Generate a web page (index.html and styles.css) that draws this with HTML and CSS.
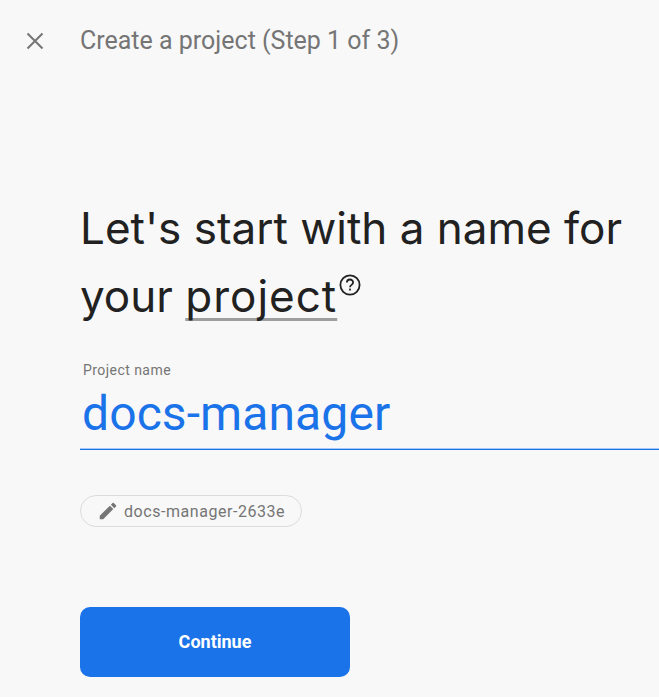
FILE: index.html
```html
<!DOCTYPE html>
<html lang="en">
<head>
<meta charset="utf-8">
<title>Create a project</title>
<link rel="stylesheet" href="styles.css">
</head>
<body>
<header class="topbar">
  <svg class="close" width="24" height="24" viewBox="0 0 24 24"><path d="M4.5 4.5l15 15M19.5 4.5l-15 15" fill="none" stroke="#757575" stroke-width="2"/></svg>
  <span class="step">Create a project (Step 1 of 3)</span>
</header>
<main class="content">
  <h1 class="title">Let's start with a name for your <span class="term">project</span><svg class="help" width="24" height="24" viewBox="0 0 24 24"><circle cx="12" cy="12" r="9.6" fill="none" stroke="#212121" stroke-width="1.8"/><path d="M8.9 9.6a3.1 3.1 0 0 1 6.2 0c0 2.2-3.1 2.3-3.1 4.6" fill="none" stroke="#212121" stroke-width="1.8"/><rect x="11.1" y="15.6" width="1.8" height="1.9" fill="#212121"/></svg></h1>
  <div class="field">
    <div class="label">Project name</div>
    <div class="value">docs-manager</div>
  </div>
  <div class="chip">
    <svg width="22" height="22" viewBox="0 0 24 24"><path fill="#757575" d="M3 17.25V21h3.75L17.81 9.94l-3.75-3.75L3 17.25zM20.71 7.04a1 1 0 0 0 0-1.41l-2.34-2.34a1 1 0 0 0-1.41 0l-1.83 1.83 3.75 3.75 1.83-1.83z"/></svg>
    <span>docs-manager-2633e</span>
  </div>
  <button class="continue">Continue</button>
</main>
</body>
</html>
```
FILE: styles.css
```css
* { box-sizing: border-box; }
html, body { margin: 0; height: 100%; }
body {
  background: #f8f8f8;
  font-family: Roboto, "Liberation Sans", sans-serif;
  overflow: hidden;
}
.topbar {
  display: flex;
  align-items: center;
  height: 81px;
  padding-left: 23px;
  gap: 33px;
}
.close { flex: none; }
.step { font-size: 25px; color: #757575; }
.content { padding: 113px 0 0 80px; }
.title {
  margin: 0;
  font-family: Inter, sans-serif;
  font-weight: 400;
  font-size: 44px;
  line-height: 68px;
  color: #212121;
  width: 575px;
}
.term {
  letter-spacing: 1px;
  text-decoration: underline;
  text-decoration-color: #9e9e9e;
  text-decoration-thickness: 3px;
  text-decoration-skip-ink: none;
  text-underline-offset: 6px;
}
.help { vertical-align: 15px; margin-left: 1px; }
.field {
  margin-top: 29px;
  border-bottom: 1px solid #1a73e8;
  box-shadow: inset 0 -1px 0 #a6c8f5;
  height: 91px;
  padding: 1px 0 0 3px;
}
.label { font-size: 14px; line-height: 20px; letter-spacing: 0.45px; color: #757575; }
.value { font-size: 48px; line-height: 64px; padding-top: 2px; margin-left: -1px; letter-spacing: 0.1px; color: #1a73e8; }
.chip {
  display: inline-flex;
  align-items: center;
  gap: 5px;
  margin-top: 45px;
  height: 32px;
  width: 222px;
  padding-left: 16px;
  border: 1px solid #dcdcdc;
  border-radius: 16px;
  font-size: 16px;
  letter-spacing: 0.55px;
  color: #757575;
}
.continue {
  display: block;
  margin-top: 80px;
  width: 270px;
  height: 70px;
  padding-bottom: 2px;
  border: 0;
  border-radius: 10px;
  background: #1a73e8;
  color: #fff;
  font-family: Roboto, sans-serif;
  font-weight: 700;
  font-size: 18px;
}
```
